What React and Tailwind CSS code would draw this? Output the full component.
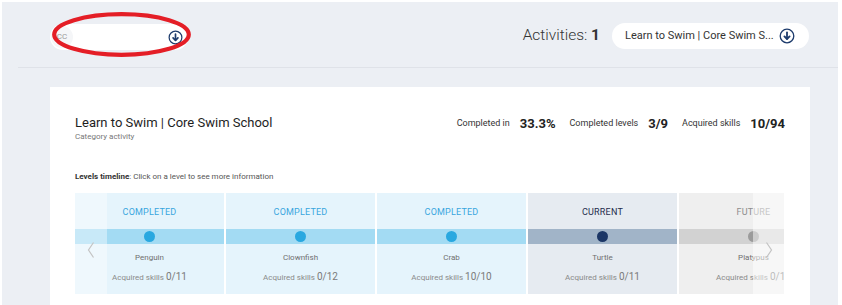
import React from "react";

const FONT = { fontFamily: "Roboto, 'Noto Sans', sans-serif" };

// ─── Petite icône "télécharger" cerclée ─────────────────────────────────────
function DownIcon({ size = 16 }) {
  return (
    <svg width={size} height={size} viewBox="0 0 16 16" fill="none">
      <circle cx="8" cy="8" r="6.8" stroke="#1d3b6c" strokeWidth="1.3" />
      <path d="M8 4.3v6.4" stroke="#1d3b6c" strokeWidth="1.8" strokeLinecap="round" />
      <path d="M5.4 8.4L8 11l2.6-2.6" stroke="#1d3b6c" strokeWidth="1.8" strokeLinecap="round" strokeLinejoin="round" />
    </svg>
  );
}

const LEVELS = [
  { status: "COMPLETED", name: "Penguin", skills: "0/11", kind: "done" },
  { status: "COMPLETED", name: "Clownfish", skills: "0/12", kind: "done" },
  { status: "COMPLETED", name: "Crab", skills: "10/10", kind: "done" },
  { status: "CURRENT", name: "Turtle", skills: "0/11", kind: "current" },
  { status: "FUTURE", name: "Platypus", skills: "0/10", kind: "future" },
];

const STYLES = {
  done:    { bg: "bg-[#e5f4fc]", band: "bg-[#a3dbf3]", dot: "bg-[#29a8e0]", label: "text-[#3aa6de]" },
  current: { bg: "bg-[#e6ebf1]", band: "bg-[#a1b4c8]", dot: "bg-[#1b3666]", label: "text-[#1f2d4d]" },
  future:  { bg: "bg-[#efefef]", band: "bg-[#d2d2d2]", dot: "bg-[#9b9b9b]", label: "text-[#8d8d8d]" },
};

function Level({ level }) {
  const s = STYLES[level.kind];
  return (
    <div className={`w-[149px] shrink-0 ${s.bg} pb-[10px]`}>
      <div className={`h-[36px] flex items-end justify-center pb-[11px] text-[9px] leading-[11px] tracking-[0.2px] ${s.label}`}>
        {level.status}
      </div>
      <div className={`h-[15px] ${s.band} flex items-center justify-center`}>
        <div className={`w-[11px] h-[11px] rounded-full ${s.dot}`} />
      </div>
      <div className="pt-[8px] text-center text-[8px] leading-[12px] text-[#707070]">{level.name}</div>
      <div className="mt-[5px] text-center leading-[12px] whitespace-nowrap text-[#8a8a8a]">
        <span className="text-[8px]">Acquired skills </span>
        <span className="text-[10px] text-[#7a7a7a]">{level.skills}</span>
      </div>
    </div>
  );
}

function Stat({ label, value }) {
  return (
    <div className="flex items-center gap-[10px]">
      <span className="text-[9px] text-[#333]">{label}</span>
      <span className="text-[13px] font-bold text-[#222]">{value}</span>
    </div>
  );
}

export default function App() {
  return (
    <div style={FONT} className="h-[305px] overflow-hidden bg-white pl-[2px] pt-[2px] pr-[4px]">
      <div className="relative h-full bg-[#eceff4]">
        {/* En-tête */}
        <div className="h-[65px] pt-[21px] pl-[48px] pr-[29px] flex items-start justify-between">
          <div className="mt-[1px] w-[138px] h-[26px] bg-white rounded-full flex items-center justify-between pr-[5px]">
            <div className="w-[22px] h-[22px] ml-[1px] rounded-full bg-[#f5f6f8] flex items-center justify-center text-[8px] text-[#9a9a9a]">
              CC
            </div>
            <DownIcon size={15} />
          </div>
          <div className="flex items-center gap-[12px]">
            <div className="text-[15.5px] font-light text-[#333]">
              Activities: <span className="font-bold">1</span>
            </div>
            <div className="w-[197px] h-[26px] bg-white rounded-full flex items-center pl-[13px] gap-[5px]">
              <span className="text-[11px] text-[#333] whitespace-nowrap">Learn to Swim | Core Swim S...</span>
              <DownIcon size={16} />
            </div>
          </div>
        </div>
        <div className="ml-[16px] h-px bg-[#dfe2e8]" />

        {/* Annotation rouge */}
        <svg className="absolute left-[50px] top-[10px]" width="139" height="45" viewBox="0 0 139 45">
          <ellipse cx="69.5" cy="22.5" rx="67.3" ry="20.3" fill="none" stroke="#e41e26" strokeWidth="4.2" />
        </svg>

        {/* Carte */}
        <div className="mt-[19px] ml-[48px] w-[760px] h-[240px] bg-white px-[25px] pt-[28px]">
          <div className="flex justify-between items-start">
            <div>
              <div className="text-[13px] leading-[16px] text-[#1e1e1e]">Learn to Swim | Core Swim School</div>
              <div className="mt-[1px] text-[8px] leading-[10px] text-[#777]">Category activity</div>
            </div>
            <div className="flex items-center gap-[14px] pt-[1px] h-[16px]">
              <Stat label="Completed in" value="33.3%" />
              <Stat label="Completed levels" value="3/9" />
              <Stat label="Acquired skills" value="10/94" />
            </div>
          </div>

          <div className="mt-[30px] text-[8px] leading-[10px] text-[#555]">
            <span className="font-bold text-[#333]">Levels timeline</span>: Click on a level to see more information
          </div>

          <div className="relative mt-[11px] w-[709px] overflow-hidden">
            <div className="flex gap-[2px]">
              {LEVELS.map((l) => (
                <Level key={l.name} level={l} />
              ))}
            </div>
            {/* Flèches de défilement */}
            <div className="absolute left-0 top-0 bottom-0 w-[32px] bg-white/40 flex items-center justify-center pt-[12px]">
              <svg width="8" height="18" viewBox="0 0 8 18">
                <path d="M6.5 1.5L1.5 9l5 7.5" fill="none" stroke="#c4c4c4" strokeWidth="1.2" />
              </svg>
            </div>
            <div className="absolute right-0 top-0 bottom-0 w-[31px] bg-white/50 flex items-center justify-center pt-[12px]">
              <svg width="8" height="18" viewBox="0 0 8 18">
                <path d="M1.5 1.5L6.5 9l-5 7.5" fill="none" stroke="#c4c4c4" strokeWidth="1.2" />
              </svg>
            </div>
          </div>
        </div>
      </div>
    </div>
  );
}
